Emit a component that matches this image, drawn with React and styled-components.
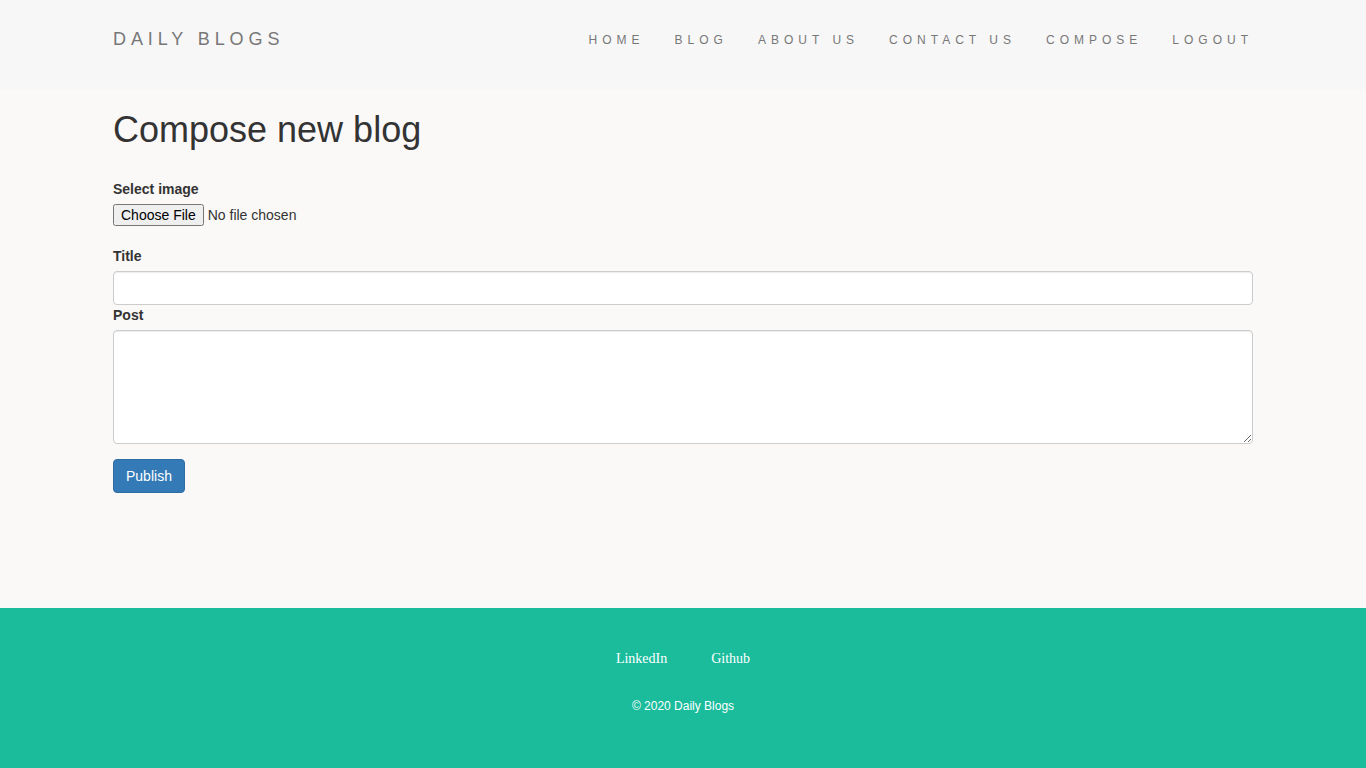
import React from 'react';
import styled, { createGlobalStyle } from 'styled-components';

const GlobalStyle = createGlobalStyle`
  * { box-sizing: border-box; }
  html, body {
    margin: 0;
    padding: 0;
  }
  body {
    font-family: "Liberation Sans", Arial, Helvetica, sans-serif;
    font-size: 14px;
    line-height: 20px;
    color: #333;
    background-color: #faf9f7;
  }
`;

const navItems = ['Home', 'Blog', 'About us', 'Contact us', 'Compose', 'Logout'];

const App = () => {
  return (
    <Page>
      <GlobalStyle />
      <Navbar>
        <Container>
          <NavRow>
            <Brand href="#">Daily Blogs</Brand>
            <NavList>
              {navItems.map((item) => (
                <NavItem key={item}>
                  <NavLink href="#">{item}</NavLink>
                </NavItem>
              ))}
            </NavList>
          </NavRow>
        </Container>
      </Navbar>

      <Main>
        <Container>
          <PageTitle>Compose new blog</PageTitle>
          <form onSubmit={(e) => e.preventDefault()}>
            <FormGroup spacing="20px">
              <Label>Select image</Label>
              <FileInput type="file" />
            </FormGroup>
            <FormGroup spacing="0px">
              <Label>Title</Label>
              <TextInput type="text" />
            </FormGroup>
            <FormGroup spacing="15px">
              <Label>Post</Label>
              <TextArea rows="5" />
            </FormGroup>
            <PublishButton type="submit">Publish</PublishButton>
          </form>
        </Container>
      </Main>

      <Footer>
        <FooterLinks>
          <FooterLink href="#">LinkedIn</FooterLink>
          <FooterLink href="#">Github</FooterLink>
        </FooterLinks>
        <Copyright>© 2020 Daily Blogs</Copyright>
      </Footer>
    </Page>
  );
};

const Page = styled.div`
  min-height: 100vh;
  display: flex;
  flex-direction: column;
`;

const Container = styled.div`
  width: 1170px;
  margin: 0 auto;
  padding: 0 15px;
`;

const Navbar = styled.header`
  height: 90px;
  background-color: #f7f7f7;
  padding-top: 29px;
`;

const NavRow = styled.div`
  display: flex;
  align-items: center;
  justify-content: space-between;
  height: 20px;
`;

const Brand = styled.a`
  font-size: 18px;
  line-height: 20px;
  letter-spacing: 4.9px;
  text-transform: uppercase;
  color: #777;
  text-decoration: none;
`;

const NavList = styled.ul`
  display: flex;
  list-style: none;
  margin: 0 -15px 0 0;
  padding: 0;
`;

const NavItem = styled.li`
  padding: 0 15px;
`;

const NavLink = styled.a`
  font-size: 12px;
  line-height: 20px;
  letter-spacing: 5px;
  text-transform: uppercase;
  color: #777;
  text-decoration: none;
`;

const Main = styled.main`
  flex: 1;
`;

const PageTitle = styled.h1`
  font-size: 36px;
  font-weight: 500;
  line-height: 1.1;
  color: #333;
  margin: 20px 0 29px;
`;

const FormGroup = styled.div`
  margin-bottom: ${(props) => props.spacing};
`;

const Label = styled.label`
  display: block;
  font-weight: bold;
  margin-bottom: 5px;
`;

const FileInput = styled.input`
  display: block;
  font-family: "Liberation Sans", Arial, sans-serif;
  font-size: 14px;
  color: #333;
`;

const TextInput = styled.input`
  display: block;
  width: 100%;
  height: 34px;
  padding: 6px 12px;
  font-size: 14px;
  background-color: #fff;
  border: 1px solid #ccc;
  border-radius: 4px;
  box-shadow: inset 0 1px 1px rgba(0, 0, 0, 0.075);
  outline: none;
`;

const TextArea = styled.textarea`
  display: block;
  width: 100%;
  height: 114px;
  padding: 6px 12px;
  font-family: inherit;
  font-size: 14px;
  background-color: #fff;
  border: 1px solid #ccc;
  border-radius: 4px;
  box-shadow: inset 0 1px 1px rgba(0, 0, 0, 0.075);
  outline: none;
`;

const PublishButton = styled.button`
  height: 34px;
  padding: 6px 12px;
  font-family: inherit;
  font-size: 14px;
  line-height: 20px;
  color: #fff;
  background-color: #337ab7;
  border: 1px solid #2e6da4;
  border-radius: 4px;
  cursor: pointer;
`;

const Footer = styled.footer`
  height: 160px;
  background-color: #1abc9c;
  padding-top: 41px;
  display: flex;
  flex-direction: column;
  align-items: center;
`;

const FooterLinks = styled.div`
  display: flex;
  gap: 44px;
`;

const FooterLink = styled.a`
  font-family: "Liberation Serif", "Times New Roman", serif;
  font-size: 14px;
  line-height: 20px;
  color: #fff;
  text-decoration: none;
`;

const Copyright = styled.p`
  margin: 27px 0 0;
  font-size: 12px;
  line-height: 20px;
  color: #fff;
`;

export default App;
